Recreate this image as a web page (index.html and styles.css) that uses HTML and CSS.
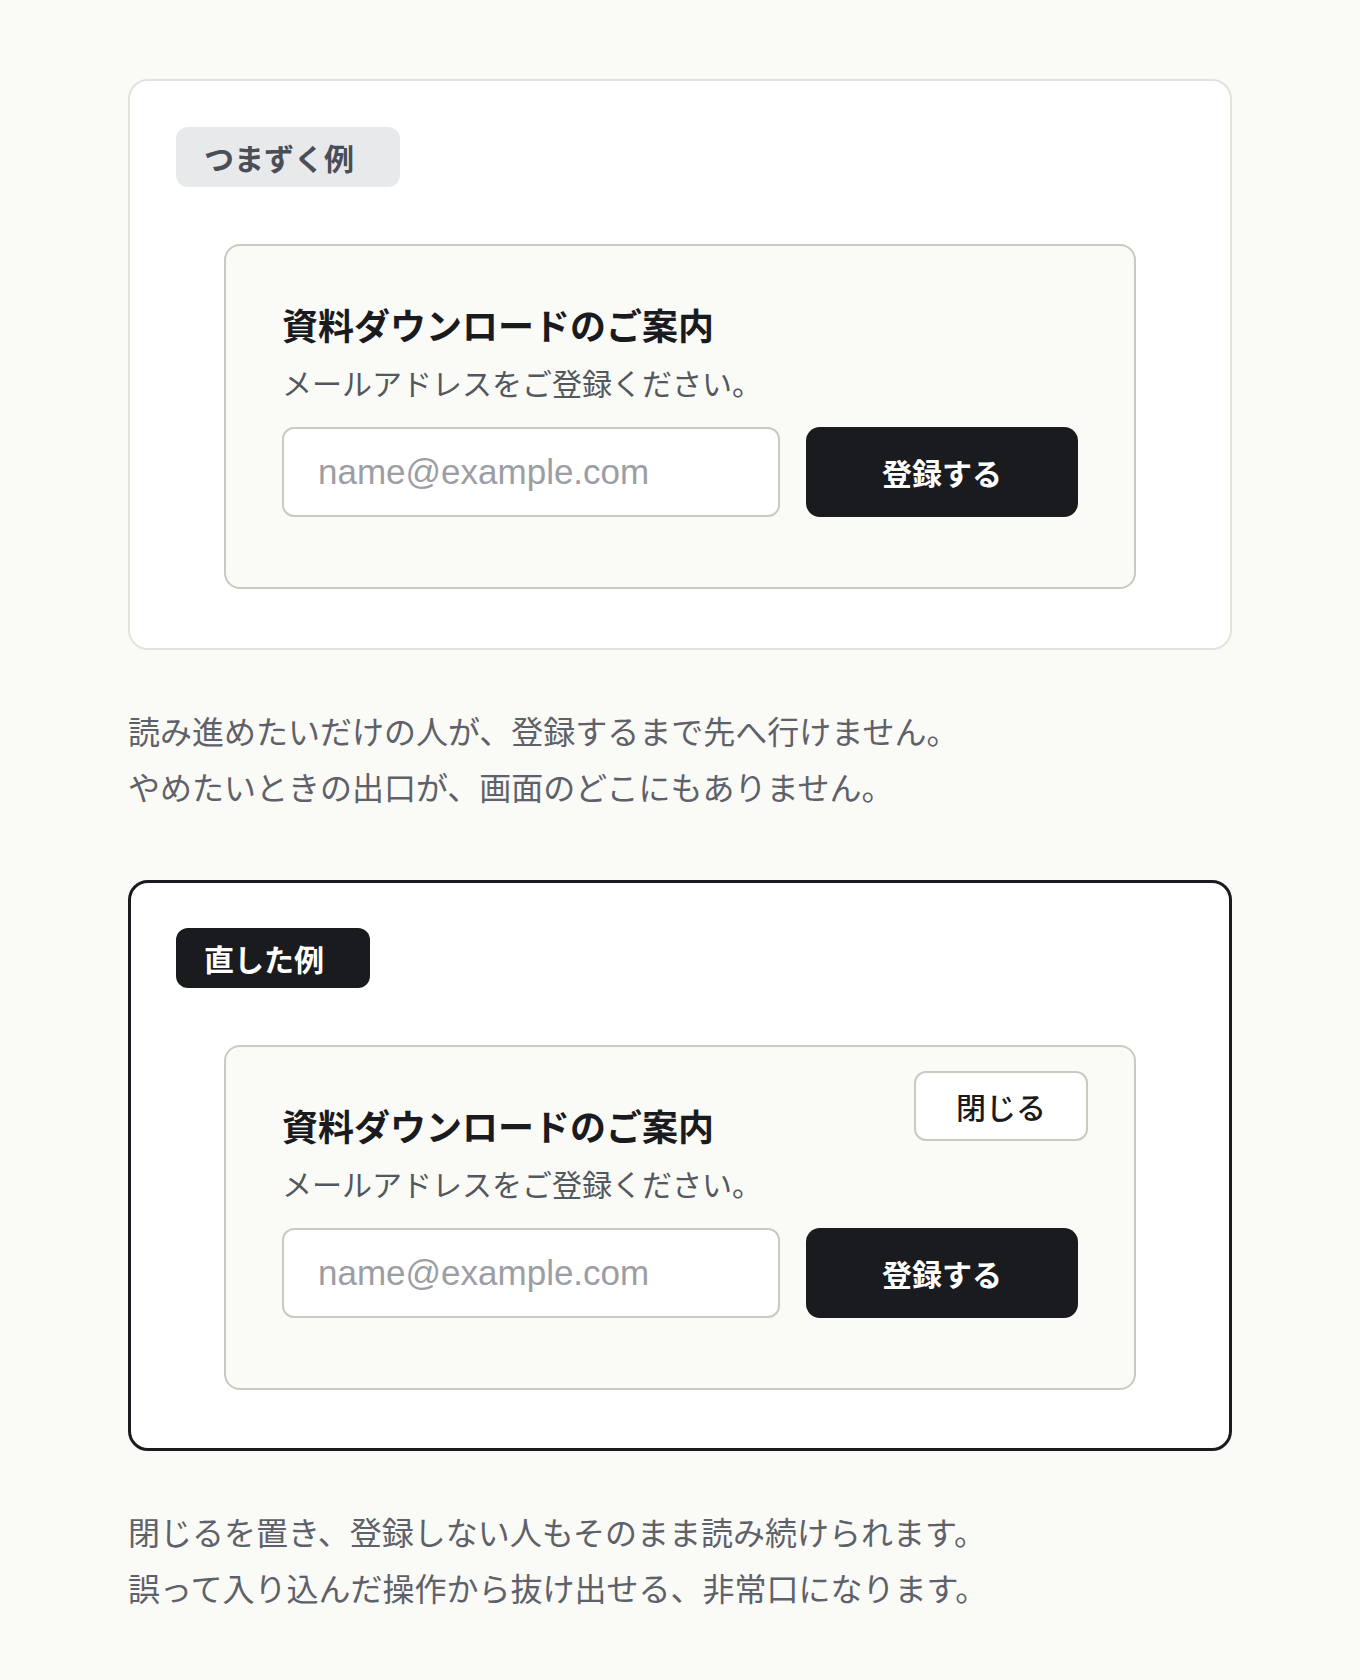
FILE: index.html
```html
<!DOCTYPE html>
<html lang="ja">
<head>
  <meta charset="UTF-8">
  <title>非常口のあるモーダル</title>
  <link rel="stylesheet" href="styles.css">
</head>
<body>
  <main class="page">

    <!-- つまずく例 -->
    <section class="example">
      <span class="tag">つまずく例</span>
      <div class="dialog">
        <h2 class="dialog-title">資料ダウンロードのご案内</h2>
        <p class="dialog-text">メールアドレスをご登録ください。</p>
        <div class="form-row">
          <input class="email" type="email" placeholder="name@example.com">
          <button class="submit">登録する</button>
        </div>
      </div>
    </section>

    <p class="note">読み進めたいだけの人が、登録するまで先へ行けません。<br>やめたいときの出口が、画面のどこにもありません。</p>

    <!-- 直した例 -->
    <section class="example fixed">
      <span class="tag">直した例</span>
      <div class="dialog">
        <button class="close">閉じる</button>
        <h2 class="dialog-title">資料ダウンロードのご案内</h2>
        <p class="dialog-text">メールアドレスをご登録ください。</p>
        <div class="form-row">
          <input class="email" type="email" placeholder="name@example.com">
          <button class="submit">登録する</button>
        </div>
      </div>
    </section>

    <p class="note">閉じるを置き、登録しない人もそのまま読み続けられます。<br>誤って入り込んだ操作から抜け出せる、非常口になります。</p>

  </main>
</body>
</html>
```

FILE: styles.css
```css
body {
  margin: 0;
  background: #fafaf6;
  color: #1a1b1f;
  font-family: "Noto Sans CJK JP", "Noto Sans", sans-serif;
}
.page {
  width: 1104px;
  margin: 0 auto;
  padding: 79px 0 60px;
}
.example {
  display: flex;
  flex-direction: column;
  align-items: flex-start;
  background: #fff;
  border: 2px solid #e3e3dc;
  border-radius: 20px;
  padding: 46px 46px 59px;
}
.example.fixed {
  border: 3px solid #1a1b1f;
  padding: 45px 45px 58px;
}
.tag {
  display: inline-block;
  height: 60px;
  line-height: 60px;
  padding: 0 46px 0 28px;
  border-radius: 12px;
  background: #e8e9eb;
  color: #4a4e56;
  font-size: 30px;
  font-weight: 700;
}
.fixed .tag {
  background: #1a1b1f;
  color: #fff;
}
.dialog {
  position: relative;
  align-self: stretch;
  margin: 57px 48px 0;
  padding: 53px 56px 70px;
  background: #fafaf6;
  border: 2px solid #cacac1;
  border-radius: 16px;
}
.dialog-title {
  margin: 0;
  font-size: 36px;
  line-height: 50px;
  font-weight: 700;
}
.dialog-text {
  margin: 9px 0 0;
  font-size: 30px;
  line-height: 48px;
  color: #53575e;
}
.form-row {
  display: flex;
  gap: 26px;
  margin-top: 21px;
}
.email {
  flex: 1;
  min-width: 0;
  height: 90px;
  box-sizing: border-box;
  padding: 0 34px;
  border: 2px solid #cacac1;
  border-radius: 12px;
  background: #fff;
  font-family: "Liberation Sans", "Noto Sans CJK JP", sans-serif;
  font-size: 35px;
  color: #1a1b1f;
}
.email::placeholder {
  color: #9c9ea4;
}
.submit {
  width: 272px;
  height: 90px;
  border: 0;
  border-radius: 14px;
  background: #1a1b1f;
  color: #fff;
  font-family: inherit;
  font-size: 30px;
  font-weight: 700;
}
.close {
  position: absolute;
  top: 24px;
  right: 46px;
  height: 70px;
  padding: 0 40px;
  border: 2px solid #cacac1;
  border-radius: 12px;
  background: #fff;
  color: #1a1b1f;
  font-family: inherit;
  font-size: 30px;
  font-weight: 500;
}
.note {
  margin: 52px 0 66px;
  font-size: 32px;
  line-height: 56px;
  color: #5e6169;
}
.note:last-child {
  margin-bottom: 0;
}
```
